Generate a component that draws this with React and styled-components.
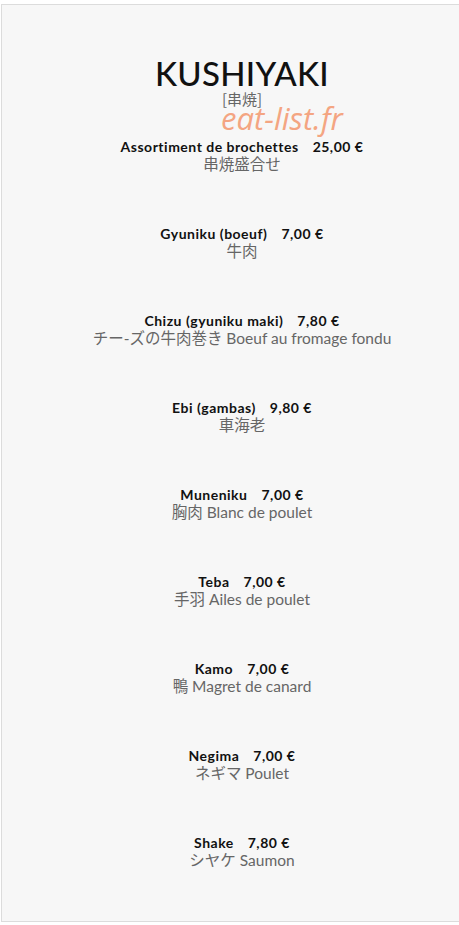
import React from "react";
import styled, { createGlobalStyle } from "styled-components";

const Global = createGlobalStyle`
  html, body { margin: 0; padding: 0; background: #fff; overflow: hidden; }
  body { font-family: "Lato", "Noto Sans CJK JP", sans-serif; }
`;

const Card = styled.div`
  box-sizing: border-box;
  margin: 4px 0 0 1px;
  width: 482px;
  height: 918px;
  background: #f7f7f7;
  border: 1px solid #dcdcdc;
  display: flex;
  flex-direction: column;
  align-items: center;
  padding-top: 50px;
  position: relative;
`;

const Title = styled.h1`
  margin: 0;
  font-family: "Lato", sans-serif;
  font-weight: 500;
  font-size: 33px;
  line-height: 36px;
  letter-spacing: 0.3px;
  color: #111;
`;

const Kanji = styled.div`
  font-family: "Noto Sans CJK JP", sans-serif;
  font-size: 15px;
  line-height: 15px;
  color: #666;
`;

const Watermark = styled.div`
  position: absolute;
  left: 219px;
  top: 93px;
  font-family: "Open Sans", sans-serif;
  font-style: italic;
  font-size: 31px;
  line-height: 40px;
  color: #f4a582;
  pointer-events: none;
`;

const List = styled.div`
  display: flex;
  flex-direction: column;
  align-items: center;
  gap: 51px;
  margin-top: 32px;
`;

const Item = styled.div`
  display: flex;
  flex-direction: column;
  align-items: center;
`;

const Name = styled.div`
  font-family: "Lato", sans-serif;
  font-weight: 700;
  font-size: 14px;
  line-height: 17px;
  letter-spacing: 0.5px;
  color: #111;
  display: flex;
  gap: 14px;
`;

const Desc = styled.div`
  font-family: "Lato", "Noto Sans CJK JP", sans-serif;
  font-size: 15.5px;
  line-height: 19px;
  color: #666;
  white-space: nowrap;
`;

const items = [
  ["Assortiment de brochettes", "25,00 €", "串焼盛合せ"],
  ["Gyuniku (boeuf)", "7,00 €", "牛肉"],
  ["Chizu (gyuniku maki)", "7,80 €", "チー-ズの牛肉巻き Boeuf au fromage fondu"],
  ["Ebi (gambas)", "9,80 €", "車海老"],
  ["Muneniku", "7,00 €", "胸肉 Blanc de poulet"],
  ["Teba", "7,00 €", "手羽 Ailes de poulet"],
  ["Kamo", "7,00 €", "鴨 Magret de canard"],
  ["Negima", "7,00 €", "ネギマ Poulet"],
  ["Shake", "7,80 €", "シヤケ Saumon"],
];

export default function App() {
  return (
    <>
      <Global />
      <Card>
        <Title>KUSHIYAKI</Title>
        <Kanji>[串焼]</Kanji>
        <Watermark>eat-list.fr</Watermark>
        <List>
          {items.map(([n, p, d]) => (
            <Item key={n}>
              <Name>
                <span>{n}</span>
                <span>{p}</span>
              </Name>
              <Desc>{d}</Desc>
            </Item>
          ))}
        </List>
      </Card>
    </>
  );
}
